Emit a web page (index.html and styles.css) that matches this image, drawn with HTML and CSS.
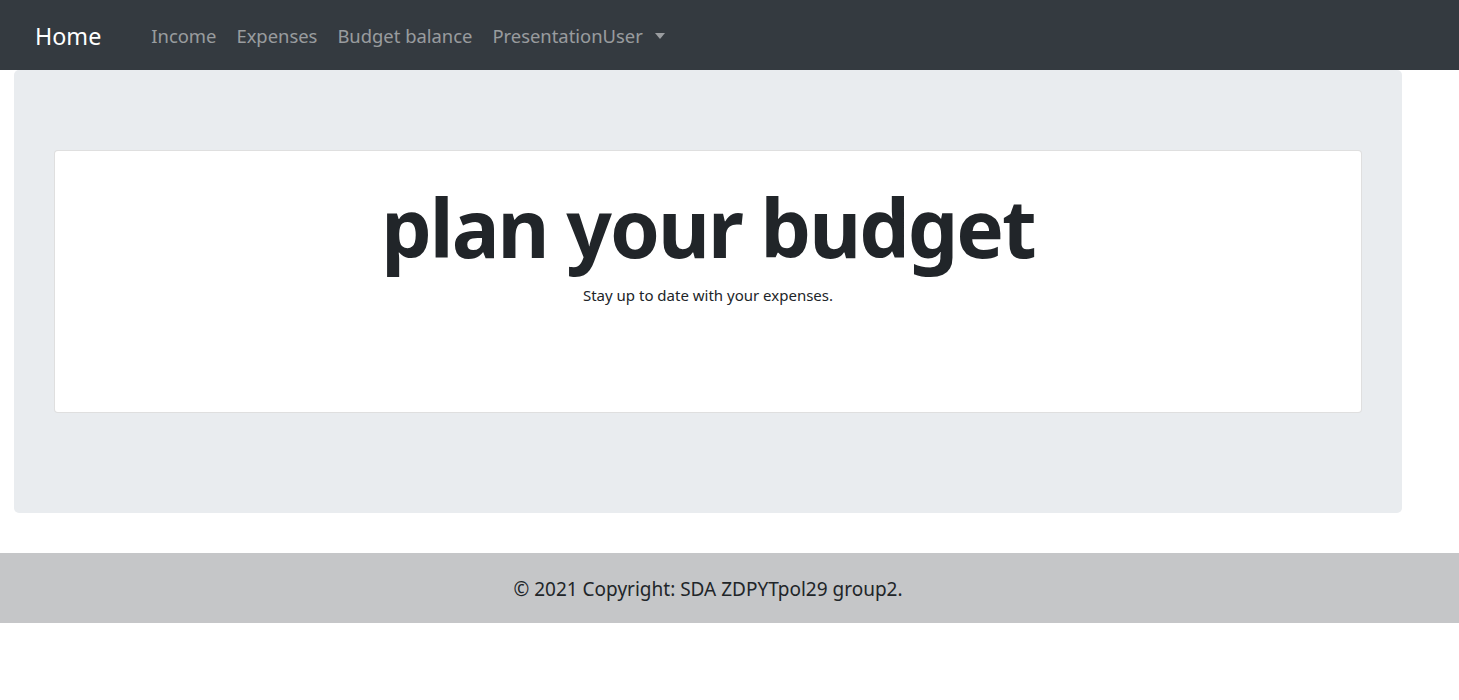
FILE: index.html
```html
<!DOCTYPE html>
<html lang="en">
<head>
<meta charset="utf-8">
<title>Home</title>
<link rel="stylesheet" href="styles.css">
</head>
<body>
<nav class="navbar">
  <a class="brand" href="#">Home</a>
  <ul class="nav">
    <li><a class="nav-link" href="#">Income</a></li>
    <li><a class="nav-link" href="#">Expenses</a></li>
    <li><a class="nav-link" href="#">Budget balance</a></li>
    <li><a class="nav-link dropdown" href="#">PresentationUser<span class="caret"></span></a></li>
  </ul>
</nav>
<main class="page">
  <section class="jumbotron">
    <div class="card">
      <h1 class="title">plan your budget</h1>
      <p class="lead">Stay up to date with your expenses.</p>
    </div>
  </section>
</main>
<footer class="footer">
  <p>© 2021 Copyright: SDA ZDPYTpol29 group2.</p>
</footer>
</body>
</html>
```

FILE: styles.css
```css
* { box-sizing: border-box; }
html, body { margin: 0; padding: 0; }
body {
  font-family: "Noto Sans", "Open Sans", sans-serif;
  color: #212529;
  background: #fff;
}
a { text-decoration: none; }

.navbar {
  height: 70px;
  background: #343a40;
  display: flex;
  align-items: center;
  padding: 1px 0 0 35px;
}
.brand {
  color: #fff;
  font-size: 23.3px;
  line-height: 1;
  padding-top: 3px;
  margin-right: 40px;
}
.nav {
  list-style: none;
  display: flex;
  margin: 0;
  padding: 0;
}
.nav-link {
  display: flex;
  align-items: center;
  color: rgba(255,255,255,.5);
  font-size: 18.4px;
  padding: 0 10px;
}
.caret {
  display: inline-block;
  margin-left: 12px;
  border-top: 6px solid rgba(255,255,255,.5);
  border-left: 5.5px solid transparent;
  border-right: 5.5px solid transparent;
  border-bottom: 0;
}

.page {
  width: 1416px;
  padding: 0 14px;
}
.jumbotron {
  background: #e9ecef;
  border-radius: 5px;
  padding: 80px 40px 100px;
}
.card {
  background: #fff;
  border: 1px solid rgba(0,0,0,.125);
  border-radius: 4px;
  height: 263px;
  text-align: center;
  padding-top: 28px;
}
.title {
  margin: 0;
  font-size: 80px;
  font-weight: 700;
  line-height: 1.2;
  letter-spacing: -2px;
}
.lead {
  margin: 10px 0 0;
  font-size: 15px;
}

.footer {
  margin-top: 40px;
  height: 70px;
  background: #c5c6c8;
  display: flex;
  align-items: center;
  padding-top: 1px;
}
.footer p {
  margin: 0;
  width: 1416px;
  text-align: center;
  font-size: 19px;
}
```
